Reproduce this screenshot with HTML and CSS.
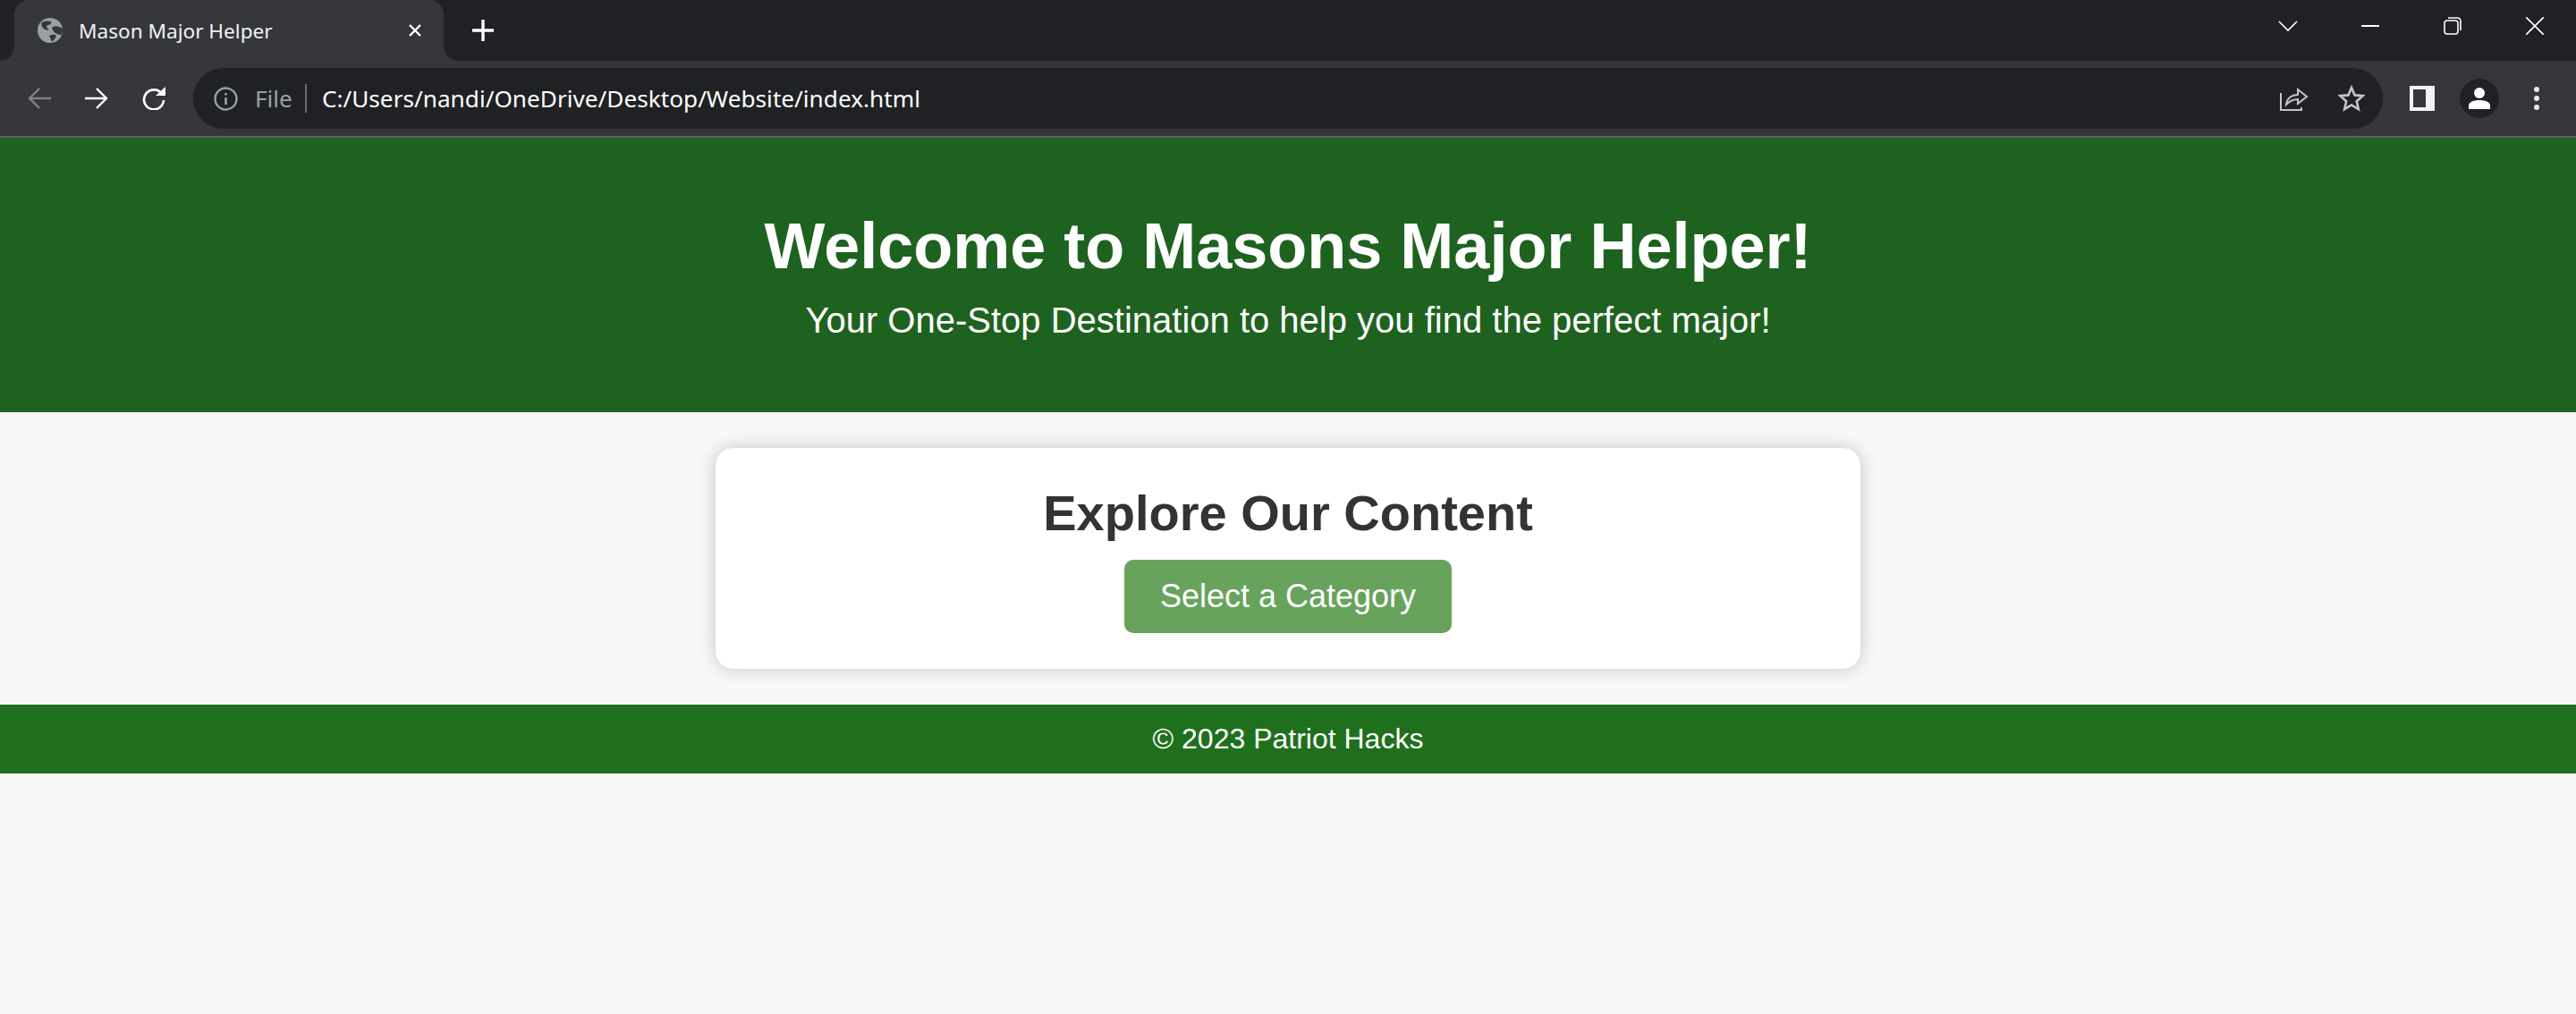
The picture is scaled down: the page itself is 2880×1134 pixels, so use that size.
FILE: index.html
```html
<!DOCTYPE html>
<html lang="en">
<head>
    <meta charset="UTF-8">
    <title>Mason Major Helper</title>
    <link rel="stylesheet" href="styles.css">
</head>
<body>

    <!-- browser chrome -->
    <div class="tab-strip">
        <div class="tab">
            <svg class="tab-globe" viewBox="0 0 28 28">
                <circle cx="14" cy="14" r="14" fill="#9aa0a6"/>
                <path d="M4 6 C7 3 11 3 15 4 C16 6 14 8 11 8 C9 10 11 12 13 13 C9 15 5 12 4 6 Z" fill="#35363a"/>
                <path d="M16 11 C19 8 24 9 28 12 C28 16 27 19 26 19 C22 19 17 16 16 11 Z" fill="#35363a"/>
                <path d="M13 20 C16 19 19 18 21 20 C20 23 18 25 16 27 C15 24 14 22 13 20 Z" fill="#35363a"/>
            </svg>
            <span class="tab-title">Mason Major Helper</span>
            <svg class="tab-close" viewBox="0 0 16 16"><path d="M2 2 L14 14 M14 2 L2 14" stroke="#fff" stroke-width="2.4" fill="none"/></svg>
        </div>
        <svg class="new-tab" viewBox="0 0 26 26"><path d="M13 1 V25 M1 13 H25" stroke="#fff" stroke-width="3.4" fill="none"/></svg>
        <div class="caption">
            <div class="caption-btn"><svg width="22" height="13" viewBox="0 0 22 13"><path d="M1 1 L11 11 L21 1" stroke="#fff" stroke-width="1.6" fill="none"/></svg></div>
            <div class="caption-btn"><svg width="20" height="20" viewBox="0 0 20 20"><path d="M0 10 H20" stroke="#fff" stroke-width="2" fill="none"/></svg></div>
            <div class="caption-btn"><svg width="20" height="20" viewBox="0 0 20 20"><rect x="1" y="4" width="15" height="15" rx="3" stroke="#fff" stroke-width="1.6" fill="none"/><path d="M5 1 H15 Q19 1 19 5 V15" stroke="#fff" stroke-width="1.6" fill="none"/></svg></div>
            <div class="caption-btn"><svg width="20" height="20" viewBox="0 0 20 20"><path d="M0 0 L20 20 M20 0 L0 20" stroke="#fff" stroke-width="1.6" fill="none"/></svg></div>
        </div>
    </div>

    <div class="toolbar">
        <div class="tool-btn"><svg width="26" height="26" viewBox="0 0 26 26"><path d="M26 13 H2 M13 2 L2 13 L13 24" stroke="#7f8285" stroke-width="2.4" fill="none"/></svg></div>
        <div class="tool-btn"><svg width="26" height="26" viewBox="0 0 26 26"><path d="M0 13 H24 M13 2 L24 13 L13 24" stroke="#fff" stroke-width="2.4" fill="none"/></svg></div>
        <div class="tool-btn"><svg width="28" height="26" viewBox="0 0 28 26"><path d="M23 8 A11 11 0 1 0 25 15" stroke="#fff" stroke-width="2.6" fill="none"/><path d="M16 10 L27 10 L27 0 Z" fill="#fff"/></svg></div>
        <div class="omnibox">
            <svg class="info-icon" width="27" height="27" viewBox="0 0 27 27"><circle cx="13.5" cy="13.5" r="12" stroke="#9aa0a6" stroke-width="2.4" fill="none"/><path d="M13.5 12 V20 M13.5 7 V9.5" stroke="#9aa0a6" stroke-width="2.6" fill="none"/></svg>
            <span class="scheme">File</span>
            <span class="divider"></span>
            <span class="url">C:/Users/nandi/OneDrive/Desktop/Website/index.html</span>
            <svg class="share-icon" width="32" height="28" viewBox="0 0 32 28"><path d="M1 8 V27 H24 V24" stroke="#c4c6c8" stroke-width="2" fill="none"/><path d="M7 21 C8 14 13 10 20 10 V4 L30 12 L20 20 V15 C15 15 11 17 7 21 Z" stroke="#c4c6c8" stroke-width="2" fill="none"/></svg>
            <svg class="star-icon" width="30" height="30" viewBox="0 0 30 30"><path d="M15 3 L18.6 11.4 L27.6 12.2 L20.8 18.2 L22.8 27 L15 22.4 L7.2 27 L9.2 18.2 L2.4 12.2 L11.4 11.4 Z" stroke="#c4c6c8" stroke-width="2.6" fill="none"/></svg>
        </div>
        <div class="tool-btn"><svg width="28" height="28" viewBox="0 0 28 28"><path fill-rule="evenodd" d="M0 0 H28 V28 H0 Z M4 4 V24 H18 V4 Z" fill="#f1f3f4"/></svg></div>
        <div class="tool-btn">
            <div class="avatar"><svg width="26" height="26" viewBox="0 0 26 26"><circle cx="13" cy="7" r="6" fill="#fff"/><path d="M1 25 V21 C1 17 7 15 13 15 C19 15 25 17 25 21 V25 Z" fill="#fff"/></svg></div>
        </div>
        <div class="tool-btn"><svg width="6" height="26" viewBox="0 0 6 26"><circle cx="3" cy="3" r="3" fill="#e8eaed"/><circle cx="3" cy="13" r="3" fill="#e8eaed"/><circle cx="3" cy="23" r="3" fill="#e8eaed"/></svg></div>
    </div>

    <!-- page -->
    <header class="site-header">
        <h1>Welcome to Masons Major Helper!</h1>
        <p>Your One-Stop Destination to help you find the perfect major!</p>
    </header>

    <main>
        <section class="content-box">
            <h2>Explore Our Content</h2>
            <button class="category-btn">Select a Category</button>
        </section>
    </main>

    <footer class="site-footer">
        <p>© 2023 Patriot Hacks</p>
    </footer>

</body>
</html>
```

FILE: styles.css
```css
* {
    box-sizing: border-box;
}
body {
    margin: 0;
    background-color: #f8f8f8;
    font-family: "Liberation Sans", Arial, sans-serif;
    height: 1134px;
    overflow: hidden;
}

/* browser chrome */
.tab-strip {
    height: 68px;
    background-color: #202124;
    display: flex;
    align-items: center;
    padding-left: 16px;
}
.tab {
    width: 480px;
    height: 68px;
    background-color: #35363a;
    border-radius: 16px 16px 0 0;
    display: flex;
    align-items: center;
    padding: 0 24px 0 26px;
    position: relative;
}
.tab::before,
.tab::after {
    content: "";
    position: absolute;
    bottom: 0;
    width: 16px;
    height: 16px;
}
.tab::before {
    left: -16px;
    background: radial-gradient(circle at 0 0, #202124 15.5px, #35363a 16px);
}
.tab::after {
    right: -16px;
    background: radial-gradient(circle at 100% 0, #202124 15.5px, #35363a 16px);
}
.tab-globe {
    width: 28px;
    height: 28px;
    flex-shrink: 0;
}
.tab-title {
    margin-left: 18px;
    flex: 1;
    color: #f1f3f4;
    font-family: "Noto Sans", sans-serif;
    font-size: 22.6px;
    white-space: nowrap;
}
.tab-close {
    width: 16px;
    height: 16px;
}
.new-tab {
    width: 26px;
    height: 26px;
    margin-left: 31px;
}
.caption {
    margin-left: auto;
    display: flex;
}
.caption-btn {
    width: 92px;
    height: 58px;
    margin-bottom: 10px;
    display: flex;
    align-items: center;
    justify-content: center;
}
.toolbar {
    height: 86px;
    background-color: #35363a;
    border-bottom: 2px solid #5f6064;
    display: flex;
    align-items: center;
    padding: 0 12px;
}
.tool-btn {
    width: 64px;
    height: 64px;
    flex-shrink: 0;
    display: flex;
    align-items: center;
    justify-content: center;
}
.omnibox {
    flex: 1;
    height: 68px;
    margin: 0 12px;
    background-color: #202124;
    border-radius: 34px;
    display: flex;
    align-items: center;
    padding: 0 20px 0 23px;
    font-family: "Noto Sans", sans-serif;
    font-size: 26.2px;
}
.scheme {
    margin-left: 19px;
    color: #9aa0a6;
}
.divider {
    width: 2px;
    height: 32px;
    margin: 0 17px 0 14px;
    background-color: #6b6e72;
}
.url {
    color: #fff;
    white-space: nowrap;
}
.share-icon {
    margin-left: auto;
}
.star-icon {
    margin-left: 33px;
}
.avatar {
    width: 44px;
    height: 44px;
    border-radius: 50%;
    background-color: #202124;
    display: flex;
    align-items: center;
    justify-content: center;
}

/* page */
.site-header {
    height: 307px;
    background-color: #1e621f;
    color: #fff;
    text-align: center;
    padding-top: 80px;
}
.site-header h1 {
    margin: 0;
    font-size: 72px;
    line-height: 83px;
}
.site-header p {
    margin: 18px 0 0;
    font-size: 40px;
    line-height: 46px;
}
main {
    padding: 40px 0;
    display: flex;
    justify-content: center;
}
.content-box {
    width: 1280px;
    height: 247px;
    background-color: #fff;
    border-radius: 20px;
    box-shadow: 0 0 20px rgba(0, 0, 0, 0.2);
    text-align: center;
    padding-top: 41px;
}
.content-box h2 {
    margin: 0;
    color: #333;
    font-size: 56px;
    line-height: 64px;
}
.category-btn {
    display: block;
    width: 366px;
    height: 82px;
    margin: 20px auto 0;
    border: none;
    border-radius: 10px;
    background-color: #67a35d;
    color: #fff;
    font-family: inherit;
    font-size: 36px;
}
.site-footer {
    height: 77px;
    background-color: #1f701d;
    color: #fff;
    font-size: 32px;
    display: flex;
    align-items: center;
    justify-content: center;
}
.site-footer p {
    margin: 0;
}
```
